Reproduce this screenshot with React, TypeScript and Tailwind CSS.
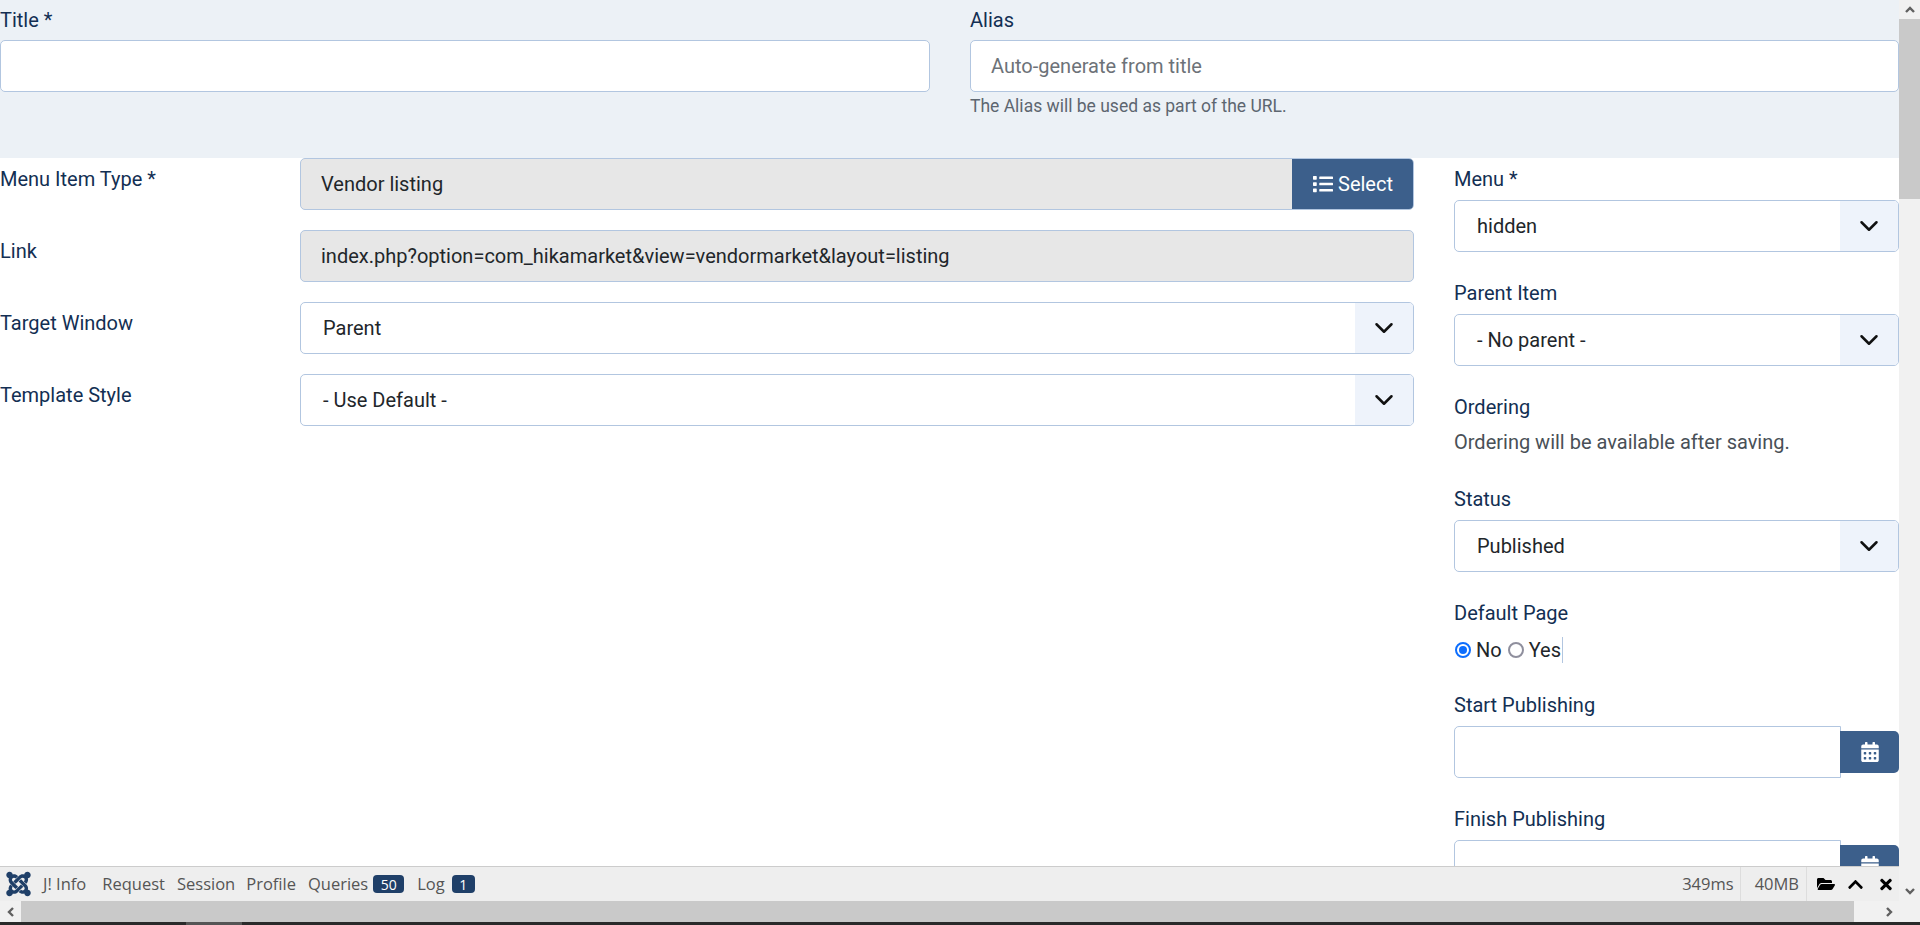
import type { ReactNode } from "react";
import { FaCalendarAlt, FaChevronUp, FaFolderOpen, FaJoomla, FaList, FaTimes } from "react-icons/fa";

function Chevron({ className }: { className?: string }) {
  return (
    <svg viewBox="0 0 16 16" className={className} fill="none" stroke="currentColor" strokeWidth="2" strokeLinecap="round" strokeLinejoin="round">
      <path d="M2 5l6 6 6-6" />
    </svg>
  );
}

function Field({ children, className = "bg-white" }: { children?: ReactNode; className?: string }) {
  return (
    <div className={`h-[52px] rounded-[5px] border border-[#b2c6e0] flex items-center text-[20px] text-[#22262a] ${className}`}>
      {children}
    </div>
  );
}

function SelectBox({ value }: { value: string }) {
  return (
    <Field className="bg-white overflow-hidden">
      <span className="flex-1 pl-[22px]">{value}</span>
      <span className="w-[58px] h-full bg-[#eef3fb] flex items-center justify-center text-[#111]">
        <Chevron className="w-[20px] h-[20px]" />
      </span>
    </Field>
  );
}

function Label({ children, className = "" }: { children: ReactNode; className?: string }) {
  return <div className={`text-[20px] leading-[30px] text-[#132f53] ${className}`}>{children}</div>;
}

function Row({ label, children }: { label: string; children: ReactNode }) {
  return (
    <div className="flex">
      <Label className="w-[300px] pt-[6px]">{label}</Label>
      <div className="flex-1">{children}</div>
    </div>
  );
}

function DateField() {
  return (
    <div className="flex items-center">
      <div className="flex-1 h-[52px] rounded-l-[5px] border border-[#b2c6e0] bg-white" />
      <button className="w-[59px] h-[42px] -ml-px bg-[#3c5f8b] rounded-r-[5px] flex items-center justify-center text-white">
        <FaCalendarAlt className="w-[18px] h-[20px]" />
      </button>
    </div>
  );
}

function Badge({ children, className = "" }: { children: ReactNode; className?: string }) {
  return (
    <span className={`h-[18px] px-[7.5px] rounded-[4px] bg-[#1f3f68] text-white text-[14px] leading-[20px] inline-block ${className}`}>
      {children}
    </span>
  );
}

function Toolbar() {
  return (
    <div className="h-[35px] border-t border-[#cccccc] bg-[#eeeeee] flex items-center text-[16.5px] text-[#555] font-['Open_Sans',sans-serif]">
      <span className="ml-[6px] mr-[12px] flex text-[#1f3f68]"><FaJoomla className="w-[25px] h-[28px]" /></span>
      <span className="mr-[16px]">J! Info</span>
      <span className="mr-[12px]">Request</span>
      <span className="mr-[11px]">Session</span>
      <span className="mr-[12px]">Profile</span>
      <span>Queries</span>
      <Badge className="ml-[5px]">50</Badge>
      <span className="ml-[13px]">Log</span>
      <Badge className="ml-[7px]">1</Badge>
      <div className="ml-auto flex items-center h-full">
        <span className="pr-[6px] h-full flex items-center border-r border-[#dddddd]">349ms</span>
        <span className="pl-[14px] pr-[7px] h-full flex items-center border-r border-[#dddddd]">40MB</span>
        <span className="w-[92px] flex items-center text-black">
          <FaFolderOpen className="ml-[10px] w-[18px] h-[16px]" />
          <FaChevronUp className="ml-[13px] w-[15px] h-[17px]" />
          <FaTimes className="ml-[17px] w-[12px] h-[17px]" />
        </span>
      </div>
    </div>
  );
}

function ScrollArrow({ d }: { d: string }) {
  return (
    <svg viewBox="0 0 12 12" className="w-[12px] h-[12px]" fill="none" stroke="#606060" strokeWidth="2.400">
      <path d={d} />
    </svg>
  );
}

export default function App() {
  return (
    <div className="h-[925px] w-[1920px] overflow-hidden flex flex-col bg-white font-['Roboto',sans-serif]">
      <div className="flex h-[922px]">
        <div className="w-[1899px] flex flex-col">
          <div className="h-[866px] overflow-hidden">
            <div className="h-[158px] bg-[#ecf1f6] grid grid-cols-[930px_929px] gap-x-[40px] pt-[5px]">
              <div>
                <Label className="mb-[5px]">Title *</Label>
                <Field />
              </div>
              <div>
                <Label className="mb-[5px]">Alias</Label>
                <Field><span className="pl-[20px] text-[#6d7278]">Auto-generate from title</span></Field>
                <div className="mt-[4px] text-[17.5px] leading-[21px] text-[#5d6670]">The Alias will be used as part of the URL.</div>
              </div>
            </div>
            <div className="flex">
              <div className="w-[1414px] flex flex-col gap-[20px]">
                <Row label="Menu Item Type *">
                  <Field className="overflow-hidden bg-[#e7e7e7]">
                    <span className="flex-1 pl-[20px]">Vendor listing</span>
                    <span className="w-[122px] h-[52px] -mr-px bg-[#3c5f8b] text-white flex items-center justify-center gap-[5px]">
                      <FaList className="w-[20px] h-[20px]" />
                      Select
                    </span>
                  </Field>
                </Row>
                <Row label="Link">
                  <Field className="bg-[#e7e7e7]"><span className="pl-[20px]">index.php?option=com_hikamarket&amp;view=vendormarket&amp;layout=listing</span></Field>
                </Row>
                <Row label="Target Window"><SelectBox value="Parent" /></Row>
                <Row label="Template Style"><SelectBox value="- Use Default -" /></Row>
              </div>
              <div className="w-[445px] ml-[40px] pt-[6px]">
                <Label className="mb-[6px]">Menu *</Label>
                <SelectBox value="hidden" />
                <Label className="mt-[26px] mb-[6px]">Parent Item</Label>
                <SelectBox value="- No parent -" />
                <Label className="mt-[26px]">Ordering</Label>
                <div className="mt-[5px] text-[20px] leading-[30px] text-[#495057]">Ordering will be available after saving.</div>
                <Label className="mt-[27px] mb-[6px]">Status</Label>
                <SelectBox value="Published" />
                <Label className="mt-[26px]">Default Page</Label>
                <div className="mt-[9px] h-[26px] flex items-center text-[20px] text-[#22262a]">
                  <span className="ml-[1px] w-[16px] h-[16px] rounded-full border-2 border-[#0d6efd] flex items-center justify-center">
                    <span className="w-[8px] h-[8px] rounded-full bg-[#0d6efd]" />
                  </span>
                  <span className="ml-[5px]">No</span>
                  <span className="ml-[6px] w-[16px] h-[16px] rounded-full border-2 border-[#8f8f9d]" />
                  <span className="ml-[5px]">Yes</span>
                  <span className="ml-[1px] w-px h-[26px] bg-[#b2c6e0]" />
                </div>
                <Label className="mt-[27px] mb-[6px]">Start Publishing</Label>
                <DateField />
                <Label className="mt-[26px] mb-[6px]">Finish Publishing</Label>
                <DateField />
              </div>
            </div>
          </div>
          <Toolbar />
          <div className="h-[21px] bg-[#f1f1f1] flex items-center">
            <span className="w-[21px] flex justify-center"><ScrollArrow d="M8 2L4 6l4 4" /></span>
            <div className="w-[1833px] h-full bg-[#c9c9c9]" />
            <span className="ml-auto pr-[4px] flex"><ScrollArrow d="M4 2l4 4-4 4" /></span>
          </div>
        </div>
        <div className="w-[21px] bg-[#f1f1f1] flex flex-col items-center">
          <span className="h-[19px] flex items-center"><ScrollArrow d="M2 8l4-4 4 4" /></span>
          <div className="w-full h-[180px] bg-[#c9c9c9]" />
          <span className="mt-auto mb-[25px] flex"><ScrollArrow d="M2 4l4 4 4-4" /></span>
        </div>
      </div>
      <div className="h-[3px] bg-[#2a2a2a] flex">
        <span className="ml-[186px] w-[56px] bg-[#555555]" />
      </div>
    </div>
  );
}
